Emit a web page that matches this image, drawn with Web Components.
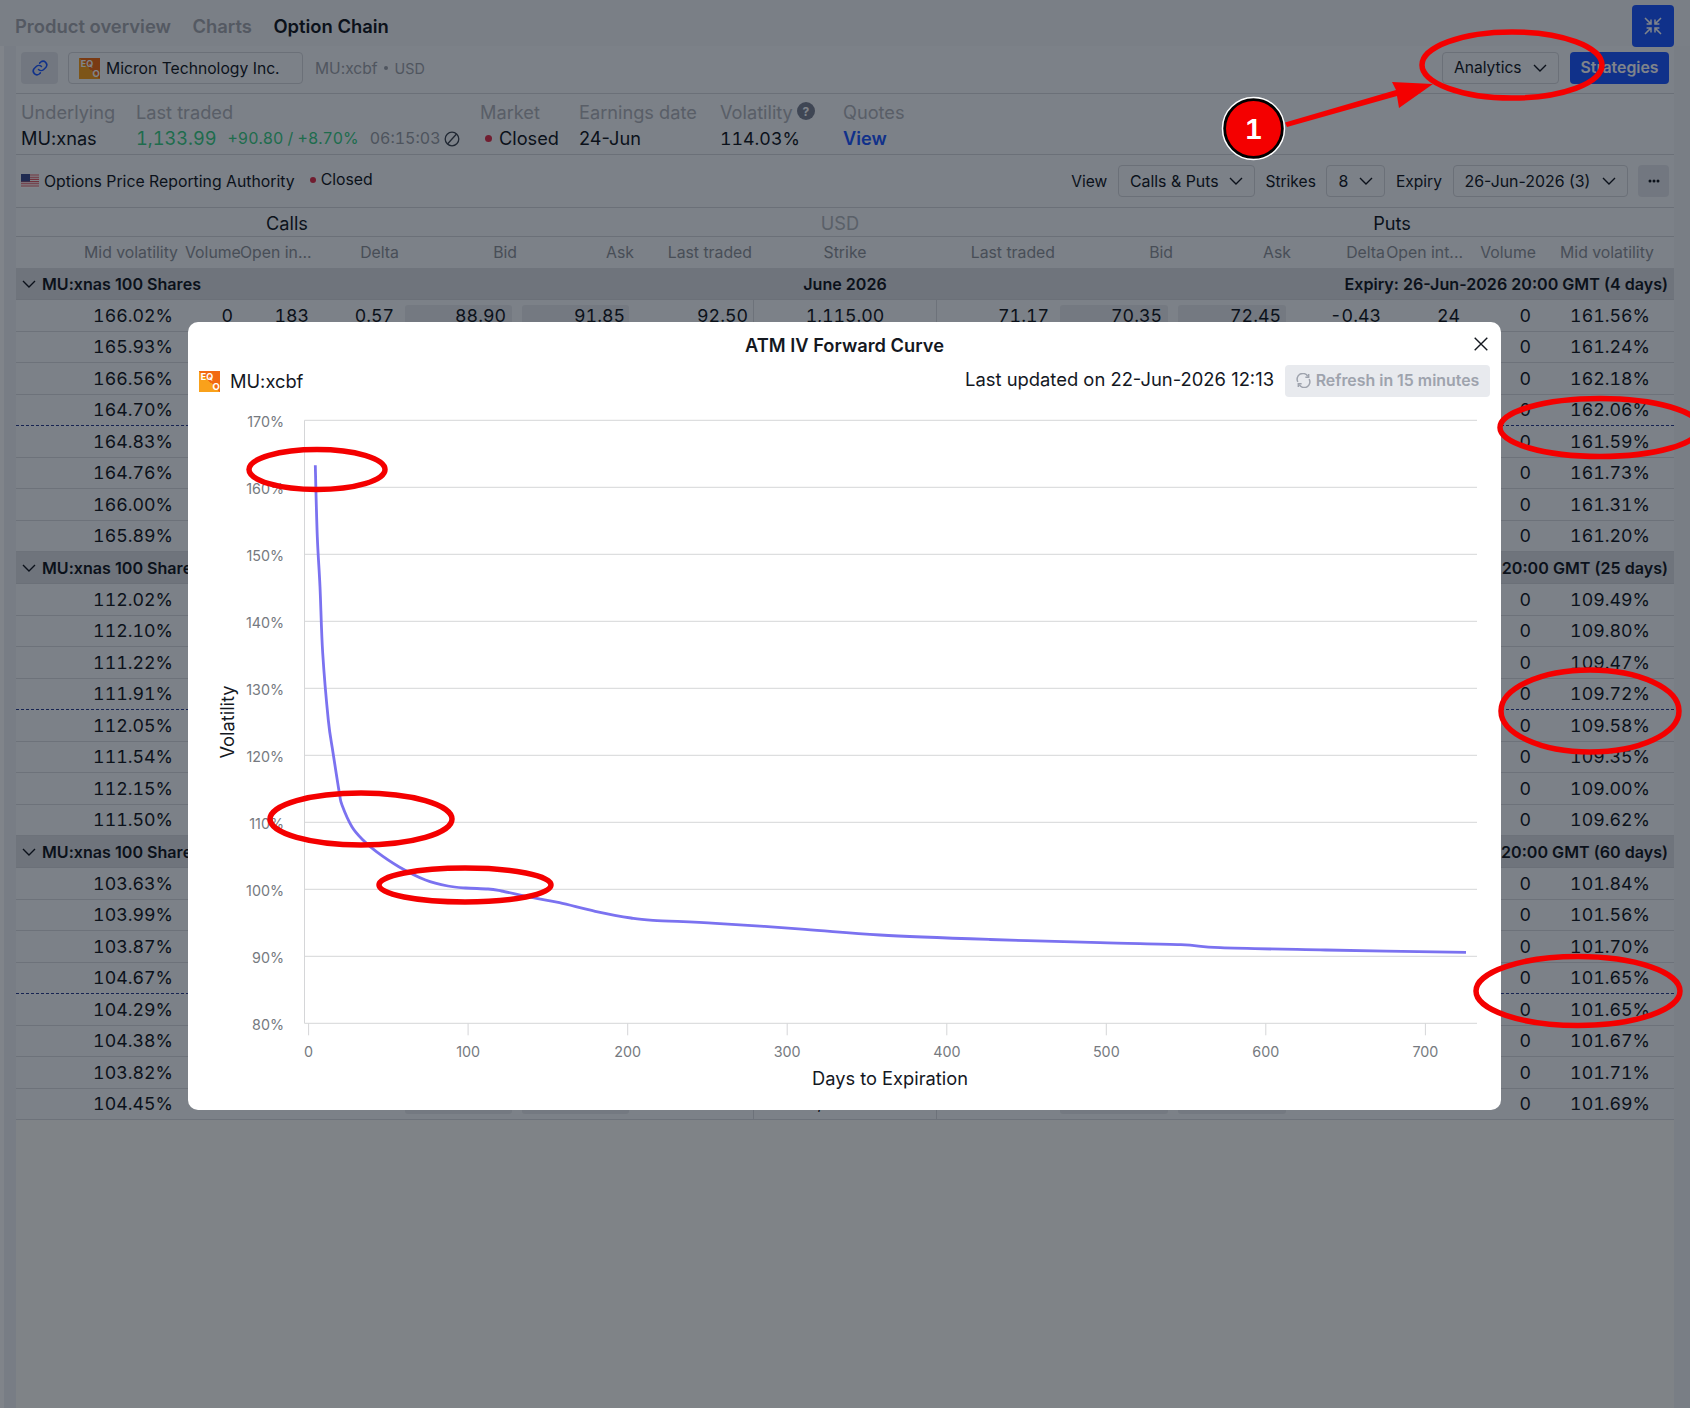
<!DOCTYPE html>
<html>
<head>
<meta charset="utf-8">
<title>Option Chain</title>
<style>
  html, body { margin: 0; padding: 0; background: #fff; }
  body { width: 1690px; height: 1408px; overflow: hidden; position: relative; font-family: Inter, "Liberation Sans", sans-serif; color: #14181f; }
</style>
</head>
<body>
<opt-app>
  <opt-tabs></opt-tabs>
  <opt-toolbar></opt-toolbar>
  <opt-stats></opt-stats>
  <opt-filters></opt-filters>
  <opt-chain></opt-chain>
</opt-app>
<iv-modal></iv-modal>
<note-layer></note-layer>

<script>
const chevron = `<svg width="14" height="8" viewBox="0 0 14 8" fill="none" stroke="currentColor" stroke-width="1.4"><path d="M1 1l6 6 6-6"/></svg>`;

const eqLogo = (size) => `<svg width="${size}" height="${size}" viewBox="0 0 21 21">
  <defs><linearGradient id="g" x1="0" y1="1" x2="1" y2="0"><stop offset="0" stop-color="#f9a11b"/><stop offset=".5" stop-color="#f9a11b"/><stop offset=".5" stop-color="#f26a11"/><stop offset="1" stop-color="#f26a11"/></linearGradient></defs>
  <rect width="21" height="21" fill="url(#g)"/>
  <text x="1.8" y="9.4" font-family="Inter, sans-serif" font-size="9" font-weight="700" fill="#fff">EQ</text>
  <text x="13.4" y="19" font-family="Inter, sans-serif" font-size="9.5" font-weight="700" fill="#fff">O</text>
</svg>`;

class OptApp extends HTMLElement {
  constructor() {
    super();
    this.attachShadow({ mode: "open" });
    this.shadowRoot.innerHTML = `
      <style>
        :host { display: block; width: 1690px; height: 1408px; box-sizing: border-box; padding: 0 16px;
          background: linear-gradient(90deg, #fff 0 4px, #eef0f4 4px 16px, #fdfcf9 16px 1674px, #f0f2f5 1674px); }
      </style>
      <slot></slot>`;
  }
}

class OptTabs extends HTMLElement {
  constructor() {
    super();
    this.attachShadow({ mode: "open" });
    this.shadowRoot.innerHTML = `
      <style>
        :host { display: flex; align-items: center; height: 46px; box-sizing: border-box; margin: 0 -16px; padding: 6px 16px 0 15px; gap: 21.5px; font-size: 18.4px; font-weight: 600; color: #a6a9af; background: #f3f4f6; }
        .on { color: #14181f; }
        button { align-self: flex-start; margin-left: auto; margin-top: -1px; width: 42px; height: 42px; border: 0; border-radius: 4px; background: #1f59ff; color: #fff; display: flex; align-items: center; justify-content: center; padding: 0; }
      </style>
      <span>Product overview</span><span>Charts</span><span class="on">Option Chain</span>
      <button><svg width="18" height="18" viewBox="0 0 18 18" fill="none" stroke="currentColor" stroke-width="1.5">
        <path d="M1 1l5.6 5.6M7 2.6V7H2.6M17 1l-5.6 5.6M11 2.6V7h4.4M1 17l5.6-5.6M7 15.4V11H2.6M17 17l-5.6-5.6M11 15.4V11h4.4"/>
      </svg></button>`;
  }
}

class OptSelect extends HTMLElement {
  constructor() {
    super();
    this.attachShadow({ mode: "open" });
    this.shadowRoot.innerHTML = `
      <style>
        :host { display: inline-flex; align-items: center; justify-content: space-between; box-sizing: border-box; height: 32px; padding: 0 11px; border: 1px solid #d4d6da; border-radius: 4px; font-size: 15.6px; color: #14181f; white-space: nowrap; }
        svg { margin-left: 10px; flex: none; }
      </style>
      <slot></slot>${chevron}`;
  }
}

class OptToolbar extends HTMLElement {
  constructor() {
    super();
    this.attachShadow({ mode: "open" });
    this.shadowRoot.innerHTML = `
      <style>
        :host { display: flex; align-items: center; height: 48px; border-bottom: 1px solid #d4d6da; box-sizing: border-box; padding: 0 5px 3px; font-size: 15.6px; background: #f6f8fa; }
        .link { width: 37px; height: 32px; border-radius: 4px; background: #e3e5ea; display: flex; align-items: center; justify-content: center; color: #1f59ff; }
        .inst { margin-left: 10px; width: 235px; height: 32px; box-sizing: border-box; border: 1px solid #d4d6da; border-radius: 4px; display: flex; align-items: center; padding-left: 10px; gap: 6px; font-size: 15.7px; white-space: nowrap; }
        .sym { margin-left: 12px; color: #9ea2a9; display: flex; align-items: center; gap: 6px; }
        .sym small { font-size: 14.3px; margin-left: 1px; }
        .sym i { width: 4px; height: 4px; border-radius: 50%; background: #9ea2a9; }
        .right { margin-left: auto; display: flex; gap: 11px; margin-top: -1px; }
        opt-select { width: 117px; }
        .go { width: 99px; height: 32px; border-radius: 4px; background: #1f59ff; color: #fff; font-size: 15.8px; font-weight: 600; display: flex; align-items: center; justify-content: center; }
      </style>
      <div class="link"><svg width="18" height="18" viewBox="0 0 24 24" fill="none" stroke="currentColor" stroke-width="2" stroke-linecap="round"><path d="M10 14a5 5 0 0 0 7 0l3-3a5 5 0 0 0-7-7l-1.5 1.5"/><path d="M14 10a5 5 0 0 0-7 0l-3 3a5 5 0 0 0 7 7l1.5-1.5"/></svg></div>
      <div class="inst">${eqLogo(21)}<span>Micron Technology Inc.</span></div>
      <div class="sym"><span>MU:xcbf</span><i></i><small>USD</small></div>
      <div class="right"><opt-select>Analytics</opt-select><div class="go">Strategies</div></div>`;
  }
}

class OptStats extends HTMLElement {
  constructor() {
    super();
    this.attachShadow({ mode: "open" });
    this.shadowRoot.innerHTML = `
      <style>
        :host { display: flex; height: 61px; box-sizing: border-box; border-bottom: 1px solid #d4d6da; padding: 8px 0 0 5px; font-size: 18.2px; white-space: nowrap; background: #f6f8fa; }
        .c { display: flex; flex-direction: column; gap: 5px; }
        .l { color: #b0b3b9; line-height: 21px; display: flex; align-items: center; gap: 4px; }
        .v { line-height: 21px; display: flex; align-items: center; }
        .num { font-variant-numeric: tabular-nums; }
        .green { color: #3ccf85; }
        .small { font-size: 15.9px; }
        .time { font-size: 16px; color: #9a9ea5; margin-left: 11px; display: flex; align-items: center; gap: 3px; }
        .dot { width: 7px; height: 7px; border-radius: 50%; background: #e0304a; margin: 0 7px 0 5px; }
        .q { width: 18px; height: 18px; border-radius: 50%; background: #7d8292; color: #fff; font-size: 12px; font-weight: 700; display: inline-flex; align-items: center; justify-content: center; margin-top: -3px; }
        .view { color: #1f59ff; font-weight: 600; }
      </style>
      <div class="c" style="width:115px"><div class="l">Underlying</div><div class="v">MU:xnas</div></div>
      <div class="c" style="width:344px"><div class="l">Last traded</div>
        <div class="v num"><span class="green">1,133.99</span><span class="green small" style="margin-left:11px">+90.80 / +8.70%</span>
          <span class="time">06:15:03 <svg width="16" height="16" viewBox="0 0 16 16" fill="none" stroke="#3f4650" stroke-width="1.3"><circle cx="8" cy="8" r="6.8"/><path d="M3.5 13L12.5 3"/></svg></span></div></div>
      <div class="c" style="width:99px"><div class="l">Market</div><div class="v"><i class="dot"></i>Closed</div></div>
      <div class="c" style="width:141px"><div class="l">Earnings date</div><div class="v">24-Jun</div></div>
      <div class="c" style="width:123px"><div class="l">Volatility <span class="q">?</span></div><div class="v num" style="font-size:17.8px">114.03%</div></div>
      <div class="c"><div class="l">Quotes</div><div class="v view">View</div></div>`;
  }
}

class OptFilters extends HTMLElement {
  constructor() {
    super();
    this.attachShadow({ mode: "open" });
    this.shadowRoot.innerHTML = `
      <style>
        :host { display: flex; align-items: center; height: 53px; box-sizing: border-box; border-bottom: 1px solid #d4d6da; padding: 0 5px; font-size: 15.8px; white-space: nowrap; background: #f6f8fa; }
        .flag { margin-right: 5px; display: block; }
        .dot { width: 6px; height: 6px; border-radius: 50%; background: #e0304a; margin: 0 5px 0 15px; }
        .closed { margin-top: -3px; }
        .right { margin-left: auto; display: flex; align-items: center; gap: 10.5px; font-size: 15.6px; }
        .more { width: 31px; height: 32px; border-radius: 4px; background: #e3e5ea; display: flex; align-items: center; justify-content: center; }
        opt-select { font-size: 15.9px; }
      </style>
      <svg class="flag" width="18" height="14" viewBox="0 0 18 14">
        <rect width="18" height="14" fill="#fff"/>
        <path d="M0 1h18M0 3.2h18M0 5.4h18M0 7.6h18M0 9.8h18M0 12h18" stroke="#e05a64" stroke-width="1.1"/>
        <rect width="9" height="7.6" fill="#3c4c8c"/>
      </svg>
      <span>Options Price Reporting Authority</span><i class="dot closed"></i><span class="closed">Closed</span>
      <div class="right">
        <span>View</span><opt-select style="width:137px">Calls &amp; Puts</opt-select>
        <span>Strikes</span><opt-select style="width:59px">8</opt-select>
        <span>Expiry</span><opt-select style="width:175px">26-Jun-2026 (3)</opt-select>
        <div class="more"><svg width="12" height="4" viewBox="0 0 12 4" fill="#14181f"><circle cx="2" cy="2" r="1.5"/><circle cx="6" cy="2" r="1.5"/><circle cx="10" cy="2" r="1.5"/></svg></div>
      </div>`;
  }
}

// column widths follow the header of the reference
const COLS = "169px 55px 71px 89px 117px 117px 119px 184px 118px 118px 118px 94px 78px 73px 138px";
const HEAD = [
  ["Mid volatility", 7], ["Volume", 1], ["Open in...", 1], ["Delta", 1], ["Bid", 0], ["Ask", 0], ["Last traded", 1], ["Strike", -1],
  ["Last traded", 0], ["Bid", 0], ["Ask", 0], ["Delta", 0], ["Open int...", 0], ["Volume", -0], ["Mid volatility", 20],
];
const VPAD = [12, 7, 2, 6, 11, 9, 5, -1, 6, 11, 10, 4, 3, 5, 24];

const GROUPS = [
  { right: "Expiry: 26-Jun-2026 20:00 GMT (4 days)", mid: "June 2026",
    l: ["166.02", "165.93", "166.56", "164.70", "164.83", "164.76", "166.00", "165.89"],
    r: ["161.56", "161.24", "162.18", "162.06", "161.59", "161.73", "161.31", "161.20"] },
  { right: "20:00 GMT (25 days)", mid: "",
    l: ["112.02", "112.10", "111.22", "111.91", "112.05", "111.54", "112.15", "111.50"],
    r: ["109.49", "109.80", "109.47", "109.72", "109.58", "109.35", "109.00", "109.62"] },
  { right: "20:00 GMT (60 days)", mid: "",
    l: ["103.63", "103.99", "103.87", "104.67", "104.29", "104.38", "103.82", "104.45"],
    r: ["101.84", "101.56", "101.70", "101.65", "101.65", "101.67", "101.71", "101.69"] },
];
const FIRST = ["", "0", "183", "0.57", "88.90", "91.85", "92.50", "1,115.00", "71.17", "70.35", "72.45", "-0.43", "24", "", ""];

class OptChain extends HTMLElement {
  constructor() {
    super();
    this.attachShadow({ mode: "open" });
    const head = HEAD.map(([t, p]) => `<div class="h" style="${p < 0 ? "text-align:center" : "padding-right:" + p + "px"}">${t}</div>`).join("");
    let body = "";
    GROUPS.forEach((g, gi) => {
      body += `<div class="group"><div class="gl">${chevron}<span>MU:xnas 100 Shares</span></div><div>${g.mid}</div><div class="gr">${g.right}</div></div>`;
      g.l.forEach((v, i) => {
        const last = gi === 2 && i === 7;
        const cells = FIRST.map((t, c) => {
          let txt = "";
          if (gi === 0 && i === 0) txt = t;
          if (c === 0) txt = v + "%";
          if (c === 13) txt = "0";
          if (c === 14) txt = g.r[i] + "%";
          if (last && c === 7) txt = "1,185.00";
          const cls = [4, 5, 9, 10].includes(c) ? "d box" : c === 7 ? "d strike" : "d";
          let st = VPAD[c] < 0 ? "" : `padding-right:${VPAD[c]}px`;
          if (last && c === 7) st = "padding-bottom:3px";
          return `<div class="${cls}" style="${st}">${txt}</div>`;
        }).join("");
        body += `<div class="row ${i === 3 ? "atm" : ""}">${cells}</div>`;
      });
    });
    this.shadowRoot.innerHTML = `
      <style>
        :host { display: block; font-size: 18.2px; background: #f6f8fa; }
        .sides { display: grid; grid-template-columns: 542px 564px 540px; height: 29px; padding-top: 2px; align-items: center; text-align: center; border-bottom: 1px solid #d4d6da; box-sizing: border-box; }
        .usd { color: #b3b6bb; }
        .heads, .row { display: grid; grid-template-columns: ${COLS}; }
        .heads { height: 31px; align-items: center; font-size: 15.8px; color: #8f9399; box-sizing: border-box; }
        .h { text-align: right; white-space: nowrap; }
        .group { display: grid; grid-template-columns: 1fr auto 1fr; align-items: center; height: 32px; padding-top: 1px; background: #dddfe3; font-size: 16.1px; font-weight: 600; box-sizing: border-box; white-space: nowrap; border-bottom: 1px solid #d4d6da; }
        .gl { display: flex; align-items: center; gap: 6px; padding-left: 6px; }
        .gr { text-align: right; padding-right: 6px; }
        .row { height: 31.5px; box-sizing: border-box; border-bottom: 1px solid #d9dbdf; align-items: center; position: relative; font-size: 17.8px; font-variant-numeric: tabular-nums; }
        .row.atm { border-bottom: 1px dashed #2c3f8f; }
        .d { text-align: right; white-space: nowrap; height: 100%; display: flex; align-items: center; justify-content: flex-end; box-sizing: border-box; }
        .box { position: relative; z-index: 0; }
        .box::before { content: ""; position: absolute; z-index: -1; left: 5px; right: 5px; top: 5px; bottom: 5px; background: #e6e8ec; border-radius: 3px; }
        .strike { justify-content: center; border-left: 1px solid #d9dbdf; border-right: 1px solid #d9dbdf; }
      </style>
      <div class="sides"><div>Calls</div><div class="usd">USD</div><div>Puts</div></div>
      <div class="heads">${head}</div>
      ${body}`;
  }
}

class IvChart extends HTMLElement {
  constructor() {
    super();
    this.attachShadow({ mode: "open" });
    // page coordinates read off the reference, shifted to this svg's origin
    const ox = 188, oy = 397;
    const yAt = (v) => 1023.3 - (v - 80) * 6.7 - oy;
    const xAt = (d) => 308.6 + d * 1.5954 - ox;
    const left = 304.5 - ox, right = 1477 - ox;
    let grid = "";
    for (let v = 80; v <= 170; v += 10) {
      const y = yAt(v).toFixed(1);
      grid += `<line x1="${left}" x2="${right}" y1="${y}" y2="${y}" stroke="#d5d6d8"/>`;
      grid += `<text x="${284 - ox}" y="${(+y + 7).toFixed(1)}" text-anchor="end" class="t">${v}%</text>`;
    }
    for (let d = 0; d <= 700; d += 100) {
      const x = xAt(d).toFixed(1);
      grid += `<line x1="${x}" x2="${x}" y1="${yAt(80)}" y2="${yAt(80) + 12}" stroke="#d5d6d8"/>`;
      grid += `<text x="${x}" y="${1057 - oy}" text-anchor="middle" class="t">${d}</text>`;
    }
    const pts = [[315.3,465.3],[317.3,536.7],[320,586.7],[322.7,653],[328.3,720],[333.1,753.3],[339.4,793.3],[342,805],[351.9,826.7],[363,840],[376.4,851.7],[398.8,866.7],[425.5,880],[447.9,886],[465.7,888],[488,889],[501.4,891],[532.7,897.7],[559.5,902.7],[595.2,911.3],[630.9,918],[653.2,920.3],[715.7,923.3],[805,929.3],[880,935],[990,939.5],[1100,942.7],[1180.9,944.7],[1220.4,947.7],[1325.7,950],[1466,952.3]]
      .map(([x, y]) => [x - ox, y - oy]);
    let d = `M${pts[0][0]} ${pts[0][1]}`;
    for (let i = 0; i < pts.length - 1; i++) {
      const p0 = pts[i - 1] || pts[i], p1 = pts[i], p2 = pts[i + 1], p3 = pts[i + 2] || p2;
      d += `C${(p1[0] + (p2[0] - p0[0]) / 6).toFixed(1)} ${(p1[1] + (p2[1] - p0[1]) / 6).toFixed(1)} ${(p2[0] - (p3[0] - p1[0]) / 6).toFixed(1)} ${(p2[1] - (p3[1] - p1[1]) / 6).toFixed(1)} ${p2[0]} ${p2[1]}`;
    }
    this.shadowRoot.innerHTML = `
      <style>
        :host { display: block; width: 1313px; height: 713px; }
        svg { display: block; font-family: Inter, "Liberation Sans", sans-serif; }
        .t { font-size: 14.3px; fill: #767a80; }
        .a { font-size: 18.3px; fill: #14181f; }
      </style>
      <svg width="1313" height="713" viewBox="0 0 1313 713">
        ${grid}
        <line x1="${left}" x2="${left}" y1="${yAt(170)}" y2="${yAt(80)}" stroke="#d5d6d8"/>
        <path d="${d}" fill="none" stroke="#7b72f0" stroke-width="2.8"/>
        <text x="${890 - ox}" y="${1085 - oy}" text-anchor="middle" class="a">Days to Expiration</text>
        <text transform="translate(${234 - ox} ${722 - oy}) rotate(-90)" text-anchor="middle" class="a">Volatility</text>
      </svg>`;
  }
}

class IvModal extends HTMLElement {
  constructor() {
    super();
    this.attachShadow({ mode: "open" });
    this.shadowRoot.innerHTML = `
      <style>
        :host { display: block; position: absolute; inset: 0; background: rgba(1, 9, 21, .5); color: #14181f; }
        .box { position: absolute; left: 188px; top: 322px; width: 1313px; height: 788px; background: #fff; border-radius: 10px; overflow: hidden; }
        .title { height: 44px; box-sizing: border-box; padding-top: 1px; display: flex; align-items: center; justify-content: center; font-size: 18.3px; font-weight: 600; position: relative; }
        .close { position: absolute; left: 1286px; top: 15px; }
        .sub { height: 32px; margin-top: -1px; display: flex; align-items: center; padding: 0 11px; }
        .name { margin-left: 10px; font-size: 18.3px; }
        .upd { margin-left: auto; font-size: 18.4px; margin-top: -5px; }
        .ref { margin-left: 11px; width: 205px; height: 32px; box-sizing: border-box; padding-bottom: 2px; border-radius: 4px; background: #e8eaee; color: #9ea3ad; font-size: 15.9px; font-weight: 600; display: flex; align-items: center; justify-content: center; gap: 5px; white-space: nowrap; }
      </style>
      <div class="box">
        <div class="title">ATM IV Forward Curve
          <svg class="close" width="14" height="14" viewBox="0 0 14 14" fill="none" stroke="#14181f" stroke-width="1.4"><path d="M.7.7l12.6 12.6M13.3.7L.7 13.3"/></svg>
        </div>
        <div class="sub">${eqLogo(21)}<span class="name">MU:xcbf</span><span class="upd">Last updated on 22-Jun-2026 12:13</span>
          <div class="ref"><svg width="15" height="15" viewBox="0 0 16 16" fill="none" stroke="#9ea3ad" stroke-width="1.6"><path d="M2 9.5A6 6 0 0 1 12.5 3.5"/><path d="M14 6.5A6 6 0 0 1 3.5 12.5"/><path d="M13.5 1v3.5H10M2.5 15v-3.5H6"/></svg>Refresh in 15 minutes</div>
        </div>
        <iv-chart></iv-chart>
      </div>`;
  }
}

class NoteLayer extends HTMLElement {
  constructor() {
    super();
    this.attachShadow({ mode: "open" });
    const rings = [[1512, 65, 90, 33], [317, 469.5, 68, 20], [361, 819, 91, 26], [465, 885, 86, 17], [1600, 427.5, 100, 29], [1590, 711, 89, 41], [1578, 991, 102, 34.5]];
    this.shadowRoot.innerHTML = `
      <style>
        :host { display: block; position: absolute; inset: 0; pointer-events: none; }
        svg { display: block; font-family: "Liberation Sans", sans-serif; }
      </style>
      <svg width="1690" height="1408" viewBox="0 0 1690 1408">
        ${rings.map(([cx, cy, rx, ry]) => `<ellipse cx="${cx}" cy="${cy}" rx="${rx}" ry="${ry}" fill="none" stroke="#f40000" stroke-width="5.5"/>`).join("")}
        <path d="M1285 122.5L1396 90 1392 82 1433 84 1399 108 1397 96 1287 127Z" fill="#f40000"/>
        <circle cx="1253.5" cy="128.5" r="31" fill="#000" stroke="#fff" stroke-width="1.5"/>
        <circle cx="1253.5" cy="128.5" r="27.5" fill="#f40000"/>
        <text x="1253.5" y="139" text-anchor="middle" font-size="29" font-weight="700" fill="#fff">1</text>
      </svg>`;
  }
}

customElements.define("opt-app", OptApp);
customElements.define("opt-tabs", OptTabs);
customElements.define("opt-select", OptSelect);
customElements.define("opt-toolbar", OptToolbar);
customElements.define("opt-stats", OptStats);
customElements.define("opt-filters", OptFilters);
customElements.define("opt-chain", OptChain);
customElements.define("iv-chart", IvChart);
customElements.define("iv-modal", IvModal);
customElements.define("note-layer", NoteLayer);
</script>
</body>
</html>
